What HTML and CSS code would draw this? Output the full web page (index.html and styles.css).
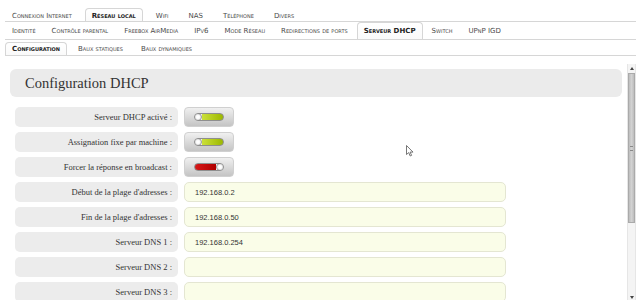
FILE: index.html
```html
<!DOCTYPE html>
<html lang="fr">
<head>
  <meta charset="UTF-8" />
  <title>Serveur DHCP</title>
  <link rel="stylesheet" href="styles.css">
</head>
<body>

  <!-- ONGLETS PRINCIPAUX -->
  <div class="tabs tabs-main">
    <a class="tab">Connexion Internet</a>
    <a class="tab active">Réseau local</a>
    <a class="tab">Wifi</a>
    <a class="tab">NAS</a>
    <a class="tab">Téléphone</a>
    <a class="tab">Divers</a>
  </div>

  <!-- SOUS-ONGLETS -->
  <div class="tabs tabs-sub">
    <a class="tab">Identité</a>
    <a class="tab">Contrôle parental</a>
    <a class="tab">Freebox AirMedia</a>
    <a class="tab">IPv6</a>
    <a class="tab">Mode Réseau</a>
    <a class="tab">Redirections de ports</a>
    <a class="tab active">Serveur DHCP</a>
    <a class="tab">Switch</a>
    <a class="tab">UPnP IGD</a>
  </div>

  <div class="tabs tabs-third">
    <a class="tab active">Configuration</a>
    <a class="tab">Baux statiques</a>
    <a class="tab">Baux dynamiques</a>
  </div>

  <!-- CONTENU -->
  <div class="frame">
    <div class="content">
      <h1 class="panel-title">Configuration DHCP</h1>

      <div class="form">
        <div class="row">
          <label class="row-label">Serveur DHCP activé :</label>
          <span class="toggle on"><span class="pill"><span class="knob"></span></span></span>
        </div>
        <div class="row">
          <label class="row-label">Assignation fixe par machine :</label>
          <span class="toggle on"><span class="pill"><span class="knob"></span></span></span>
        </div>
        <div class="row">
          <label class="row-label">Forcer la réponse en broadcast :</label>
          <span class="toggle off"><span class="pill"><span class="knob"></span></span></span>
        </div>
        <div class="row">
          <label class="row-label">Début de la plage d'adresses :</label>
          <input class="field" type="text" value="192.168.0.2">
        </div>
        <div class="row">
          <label class="row-label">Fin de la plage d'adresses :</label>
          <input class="field" type="text" value="192.168.0.50">
        </div>
        <div class="row">
          <label class="row-label">Serveur DNS 1 :</label>
          <input class="field" type="text" value="192.168.0.254">
        </div>
        <div class="row">
          <label class="row-label">Serveur DNS 2 :</label>
          <input class="field" type="text" value="">
        </div>
        <div class="row">
          <label class="row-label">Serveur DNS 3 :</label>
          <input class="field" type="text" value="">
        </div>
      </div>
    </div>

    <div class="scrollbar">
      <div class="sb-arrow sb-up"></div>
      <div class="sb-thumb"><span class="sb-grip"></span></div>
      <div class="sb-track"></div>
      <div class="sb-arrow sb-down"></div>
    </div>
  </div>

  <!-- CURSEUR -->
  <svg class="cursor" width="8" height="12" viewBox="0 0 8 12">
    <path d="M0.5 0.5 L0.5 9.5 L2.7 7.6 L4.2 11 L5.6 10.4 L4.1 7.1 L7 7.1 Z" fill="#fff" stroke="#555" stroke-width="0.8"/>
  </svg>

</body>
</html>
```

FILE: styles.css
```css
* { margin: 0; padding: 0; box-sizing: border-box; }
html, body {
  width: 100%;
  height: 100%;
  overflow: hidden;
  background: white;
  font-family: "DejaVu Sans", Verdana, sans-serif;
}

/* ONGLETS */
.tabs {
  display: flex;
  align-items: flex-end;
  margin: 0 8px 0 5px;
  border-bottom: 1px solid #d6d6d6;
}

.tab {
  display: flex;
  align-items: center;
  padding: 0 6px;
  font-size: 7px;
  font-variant: small-caps;
  color: #4a4a4a;
  border: 1px solid transparent;
  border-bottom: none;
  border-radius: 4px 4px 0 0;
  white-space: nowrap;
}

.tab.active {
  font-weight: bold;
  color: #222;
  border-color: #d6d6d6;
  background: linear-gradient(#fff, #fafafa);
}

.tabs-main {
  padding-top: 8px;
  gap: 6px;
}
.tabs-main .tab { height: 13px; padding-top: 1px; }

.tabs-sub {
  gap: 2px;
}
.tabs-sub .tab { height: 17px; }

.tabs-third {
  padding-top: 2px;
  gap: 4px;
}
.tabs-third .tab { height: 13px; }

/* CADRE */
.frame {
  display: flex;
  height: 238px;
  margin-top: 7px;
}

.content {
  width: 627px;
  padding: 6px 5px 0 10px;
}

.panel-title {
  height: 28px;
  padding-left: 15px;
  display: flex;
  align-items: center;
  background: #ebebeb;
  border-radius: 6px;
  font-family: "Liberation Serif", "Times New Roman", serif;
  font-weight: normal;
  font-size: 14.5px;
  color: #333;
}

.form {
  display: flex;
  flex-direction: column;
  gap: 5px;
  margin-top: 10px;
  padding-left: 5px;
}

.row {
  display: flex;
  gap: 6px;
  height: 20px;
}

.row-label {
  width: 163px;
  display: flex;
  align-items: center;
  justify-content: flex-end;
  padding-right: 6px;
  background: #ececec;
  border-radius: 5px;
  font-family: "Liberation Serif", "Times New Roman", serif;
  font-size: 8.5px;
  color: #333;
}

/* INTERRUPTEURS */
.toggle {
  width: 50px;
  display: flex;
  align-items: center;
  justify-content: center;
  background: linear-gradient(#f0f0f0, #c4c4c4);
  border: 1px solid #d0d0d0;
  border-radius: 4px;
}

.pill {
  position: relative;
  width: 30px;
  height: 8px;
  border: 1px solid #8e8e8e;
  border-radius: 4px;
  background: #f8f8f8;
  overflow: hidden;
}

.toggle.on .pill {
  background: linear-gradient(to right, #f8f8f8 0 25%, #cbe03a 25%, #9cb800);
}

.toggle.off .pill {
  background: linear-gradient(to right, #d81818, #b00000 74%, #f8f8f8 74%);
}

.knob {
  position: absolute;
  top: -1px;
  width: 8px;
  height: 8px;
  border-radius: 50%;
  background: radial-gradient(#fff 30%, #d0d0d0);
  border: 1px solid #999;
}
.toggle.on .knob { left: -1px; }
.toggle.off .knob { right: -1px; }

/* CHAMPS */
.field {
  width: 322px;
  height: 20px;
  padding-left: 10px;
  background: #fafde8;
  border: 1px solid #e4e6d2;
  border-radius: 5px;
  font-family: "Liberation Sans Narrow", "Liberation Sans", Arial, sans-serif;
  font-size: 7.5px;
  color: #333;
  outline: none;
}

/* BARRE DE DEFILEMENT */
.scrollbar {
  width: 9px;
  display: flex;
  flex-direction: column;
  margin-top: 1px;
  border-left: 1px solid #e6e6e6;
  border-right: 1px solid #e6e6e6;
  background: #f4f4f4;
}

.sb-arrow {
  height: 9px;
  display: flex;
  justify-content: center;
  align-items: center;
}
.sb-up::after {
  content: "";
  border: 2px solid transparent;
  border-bottom: 3px solid #444;
  margin-top: -3px;
}
.sb-down::after {
  content: "";
  border: 2px solid transparent;
  border-top: 3px solid #444;
  margin-top: 3px;
}

.sb-thumb {
  height: 150px;
  display: flex;
  justify-content: center;
  align-items: center;
  background: linear-gradient(to right, #bdbdbd, #d2d2d2, #bdbdbd);
  border: 1px solid #aaa;
}

.sb-grip {
  width: 3px;
  height: 5px;
  border-top: 1px solid #888;
  border-bottom: 1px solid #888;
}

.sb-track {
  flex: 1;
}

.cursor {
  position: absolute;
  left: 406px;
  top: 145px;
}
```
